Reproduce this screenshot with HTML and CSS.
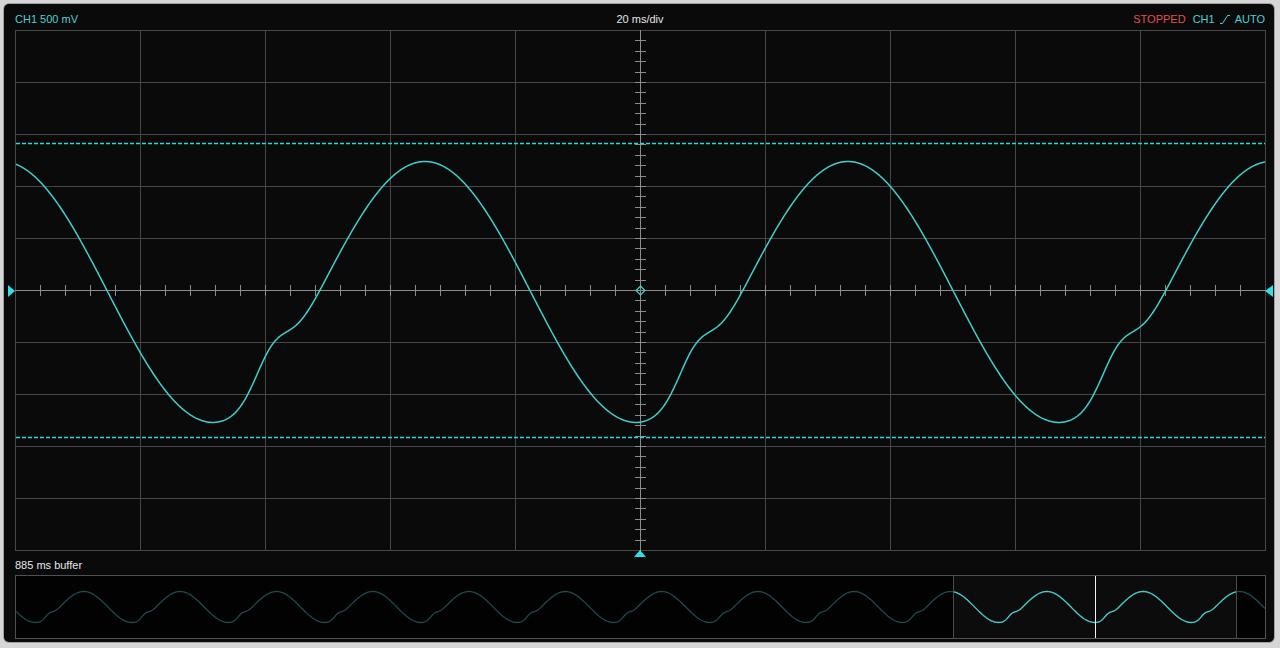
FILE: index.html
```html
<!DOCTYPE html>
<html lang="en">
  <head>
    <meta charset="UTF-8" />
    <meta name="viewport" content="width=device-width, initial-scale=1.0" />
    <title>Scope</title>
    <link rel="stylesheet" href="styles.css">
  </head>
  <body>
    <div class="scope">
      <div class="status">
        <span class="volts">CH1 500 mV</span>
        <span class="timebase">20 ms/div</span>
        <span class="trigger">
          <span class="stopped">STOPPED</span>
          <span>CH1</span>
          <svg class="edge" width="10" height="9" viewBox="0 0 10 9">
            <path d="M0 8.5 H2.5 L7.5 0.5 H10" />
          </svg>
          <span>AUTO</span>
        </span>
      </div>

      <div class="screen">
        <svg id="plot" width="1251" height="521"></svg>
        <span class="marker marker-left"></span>
        <span class="marker marker-right"></span>
        <span class="marker marker-bottom"></span>
      </div>

      <div class="buffer-label">885 ms buffer</div>
      <div class="buffer">
        <svg id="overview" width="1251" height="64"></svg>
      </div>
    </div>

    <script>
      const NS = "http://www.w3.org/2000/svg";

      function add(svg, tag, attrs) {
        const el = document.createElementNS(NS, tag);
        for (const k in attrs) el.setAttribute(k, attrs[k]);
        svg.appendChild(el);
        return el;
      }

      // one period of the captured signal, peak at phase 0
      function sample(th) {
        th = th - 2 * Math.PI * Math.round(th / (2 * Math.PI));
        const d = th + 2.28;
        return Math.cos(th) + 0.24 * Math.exp((-d * d) / 0.125);
      }

      function trace(from, to, phase, fy) {
        let d = "";
        for (let x = from; x <= to; x += 0.5) {
          d += (d ? " L" : "M") + x.toFixed(1) + " " + fy(sample(phase(x))).toFixed(2);
        }
        return d;
      }

      function drawPlot() {
        const svg = document.getElementById("plot");

        for (let i = 0; i <= 10; i++) {
          add(svg, "line", { class: "grid", x1: i * 125 + 0.5, y1: 0, x2: i * 125 + 0.5, y2: 521 });
          add(svg, "line", { class: "grid", x1: 0, y1: i * 52 + 0.5, x2: 1251, y2: i * 52 + 0.5 });
        }

        add(svg, "line", { class: "axis", x1: 625.5, y1: 0, x2: 625.5, y2: 521 });
        add(svg, "line", { class: "axis", x1: 0, y1: 260.5, x2: 1251, y2: 260.5 });

        for (let k = 1; k < 50; k++) {
          const x = k * 25 + 0.5;
          add(svg, "line", { class: "axis", x1: x, y1: 255, x2: x, y2: 266 });
          const y = Math.round(k * 10.4) + 0.5;
          add(svg, "line", { class: "axis", x1: 620, y1: y, x2: 631, y2: y });
        }

        // trigger level cursors
        add(svg, "line", { class: "level", x1: 1, y1: 113.5, x2: 1250, y2: 113.5 });
        add(svg, "line", { class: "level", x1: 1, y1: 407.5, x2: 1250, y2: 407.5 });

        add(svg, "path", {
          class: "wave",
          d: trace(1, 1250, (x) => (2 * Math.PI * (x + 15 - 425)) / 423, (v) => 262 - 130.5 * v),
        });

        add(svg, "polygon", {
          class: "origin",
          points: "625.5,256 630,260.5 625.5,265 621,260.5",
        });
      }

      function drawOverview() {
        const svg = document.getElementById("overview");
        const left = 938, right = 1221, trig = 1080;
        const phase = (x) => Math.PI + (2 * Math.PI * (x - trig)) / 96.3;
        const yOf = (v) => 32 - 15.5 * v;

        add(svg, "rect", { class: "bg", x: 0, y: 0, width: 1251, height: 64 });
        add(svg, "rect", { class: "window", x: left, y: 0, width: right - left, height: 64 });
        add(svg, "path", { class: "wave-dim", d: trace(1, 1250, phase, yOf) });
        add(svg, "path", { class: "wave-lit", d: trace(left, right, phase, yOf) });
        add(svg, "line", { class: "edge-line", x1: left + 0.5, y1: 0, x2: left + 0.5, y2: 64 });
        add(svg, "line", { class: "edge-line", x1: right + 0.5, y1: 0, x2: right + 0.5, y2: 64 });
        add(svg, "line", { class: "trig-line", x1: trig + 0.5, y1: 0, x2: trig + 0.5, y2: 63 });
        add(svg, "rect", { class: "frame", x: 0.5, y: 0.5, width: 1250, height: 63 });
      }

      drawPlot();
      drawOverview();
    </script>
  </body>
</html>
```

FILE: styles.css
```css
html,
body {
  margin: 0;
  height: 648px;
  overflow: hidden;
}

body {
  background-color: #d6d6d6;
  font-family: "Liberation Sans", Arial, sans-serif;
  font-size: 11px;
  padding: 4px 0 0 4px;
  box-sizing: border-box;
}

.scope {
  width: 1270px;
  height: 638px;
  box-sizing: border-box;
  padding: 0 8px 0 11px;
  background-color: #0a0a0a;
  border-radius: 5px;
  box-shadow: 0 0 0 1px #a0a0a0;
}

.status {
  display: grid;
  grid-template-columns: 1fr auto 1fr;
  align-items: center;
  height: 26px;
  box-sizing: border-box;
  padding: 7px 1px 3px 0;
  line-height: 16px;
}

.volts {
  color: #4fcfd6;
}

.timebase {
  color: #e6e6e6;
}

.trigger {
  display: flex;
  justify-content: flex-end;
  align-items: center;
  gap: 5px;
  color: #4fcfd6;
}

.stopped {
  color: #e2504f;
  margin-right: 2px;
}

.edge path {
  fill: none;
  stroke: #4fcfd6;
  stroke-width: 1;
}

.screen {
  position: relative;
  width: 1251px;
  height: 521px;
}

.screen svg,
.buffer svg {
  display: block;
}

.grid {
  stroke: #474747;
  stroke-width: 1;
}

.axis {
  stroke: #8c8c8c;
  stroke-width: 1;
}

.level {
  stroke: #2ad6e0;
  stroke-width: 1.4;
  stroke-dasharray: 4 2;
}

.wave {
  fill: none;
  stroke: #3fcfcf;
  stroke-width: 1.5;
  stroke-linejoin: round;
}

.origin {
  fill: none;
  stroke: #3fd6d6;
  stroke-width: 1.2;
}

.marker {
  position: absolute;
  width: 0;
  height: 0;
}

.marker-left {
  left: -7px;
  top: 255px;
  border-top: 6px solid transparent;
  border-bottom: 6px solid transparent;
  border-left: 7px solid #2fe0e6;
}

.marker-right {
  left: 1250px;
  top: 255px;
  border-top: 6px solid transparent;
  border-bottom: 6px solid transparent;
  border-right: 8px solid #2fe0e6;
}

.marker-bottom {
  left: 619px;
  top: 520px;
  border-left: 6px solid transparent;
  border-right: 6px solid transparent;
  border-bottom: 7px solid #2fe0e6;
}

.buffer-label {
  height: 24px;
  box-sizing: border-box;
  padding-top: 6px;
  line-height: 16px;
  color: #e6e6e6;
}

.buffer .bg {
  fill: #020202;
}

.buffer .window {
  fill: #0c0c0c;
}

.wave-dim {
  fill: none;
  stroke: #1f4a4e;
  stroke-width: 1.3;
}

.wave-lit {
  fill: none;
  stroke: #46c8c8;
  stroke-width: 1.3;
}

.edge-line {
  stroke: #4c4c4c;
  stroke-width: 1;
}

.trig-line {
  stroke: #f2f2f2;
  stroke-width: 1;
}

.frame {
  fill: none;
  stroke: #505050;
  stroke-width: 1;
}
```
